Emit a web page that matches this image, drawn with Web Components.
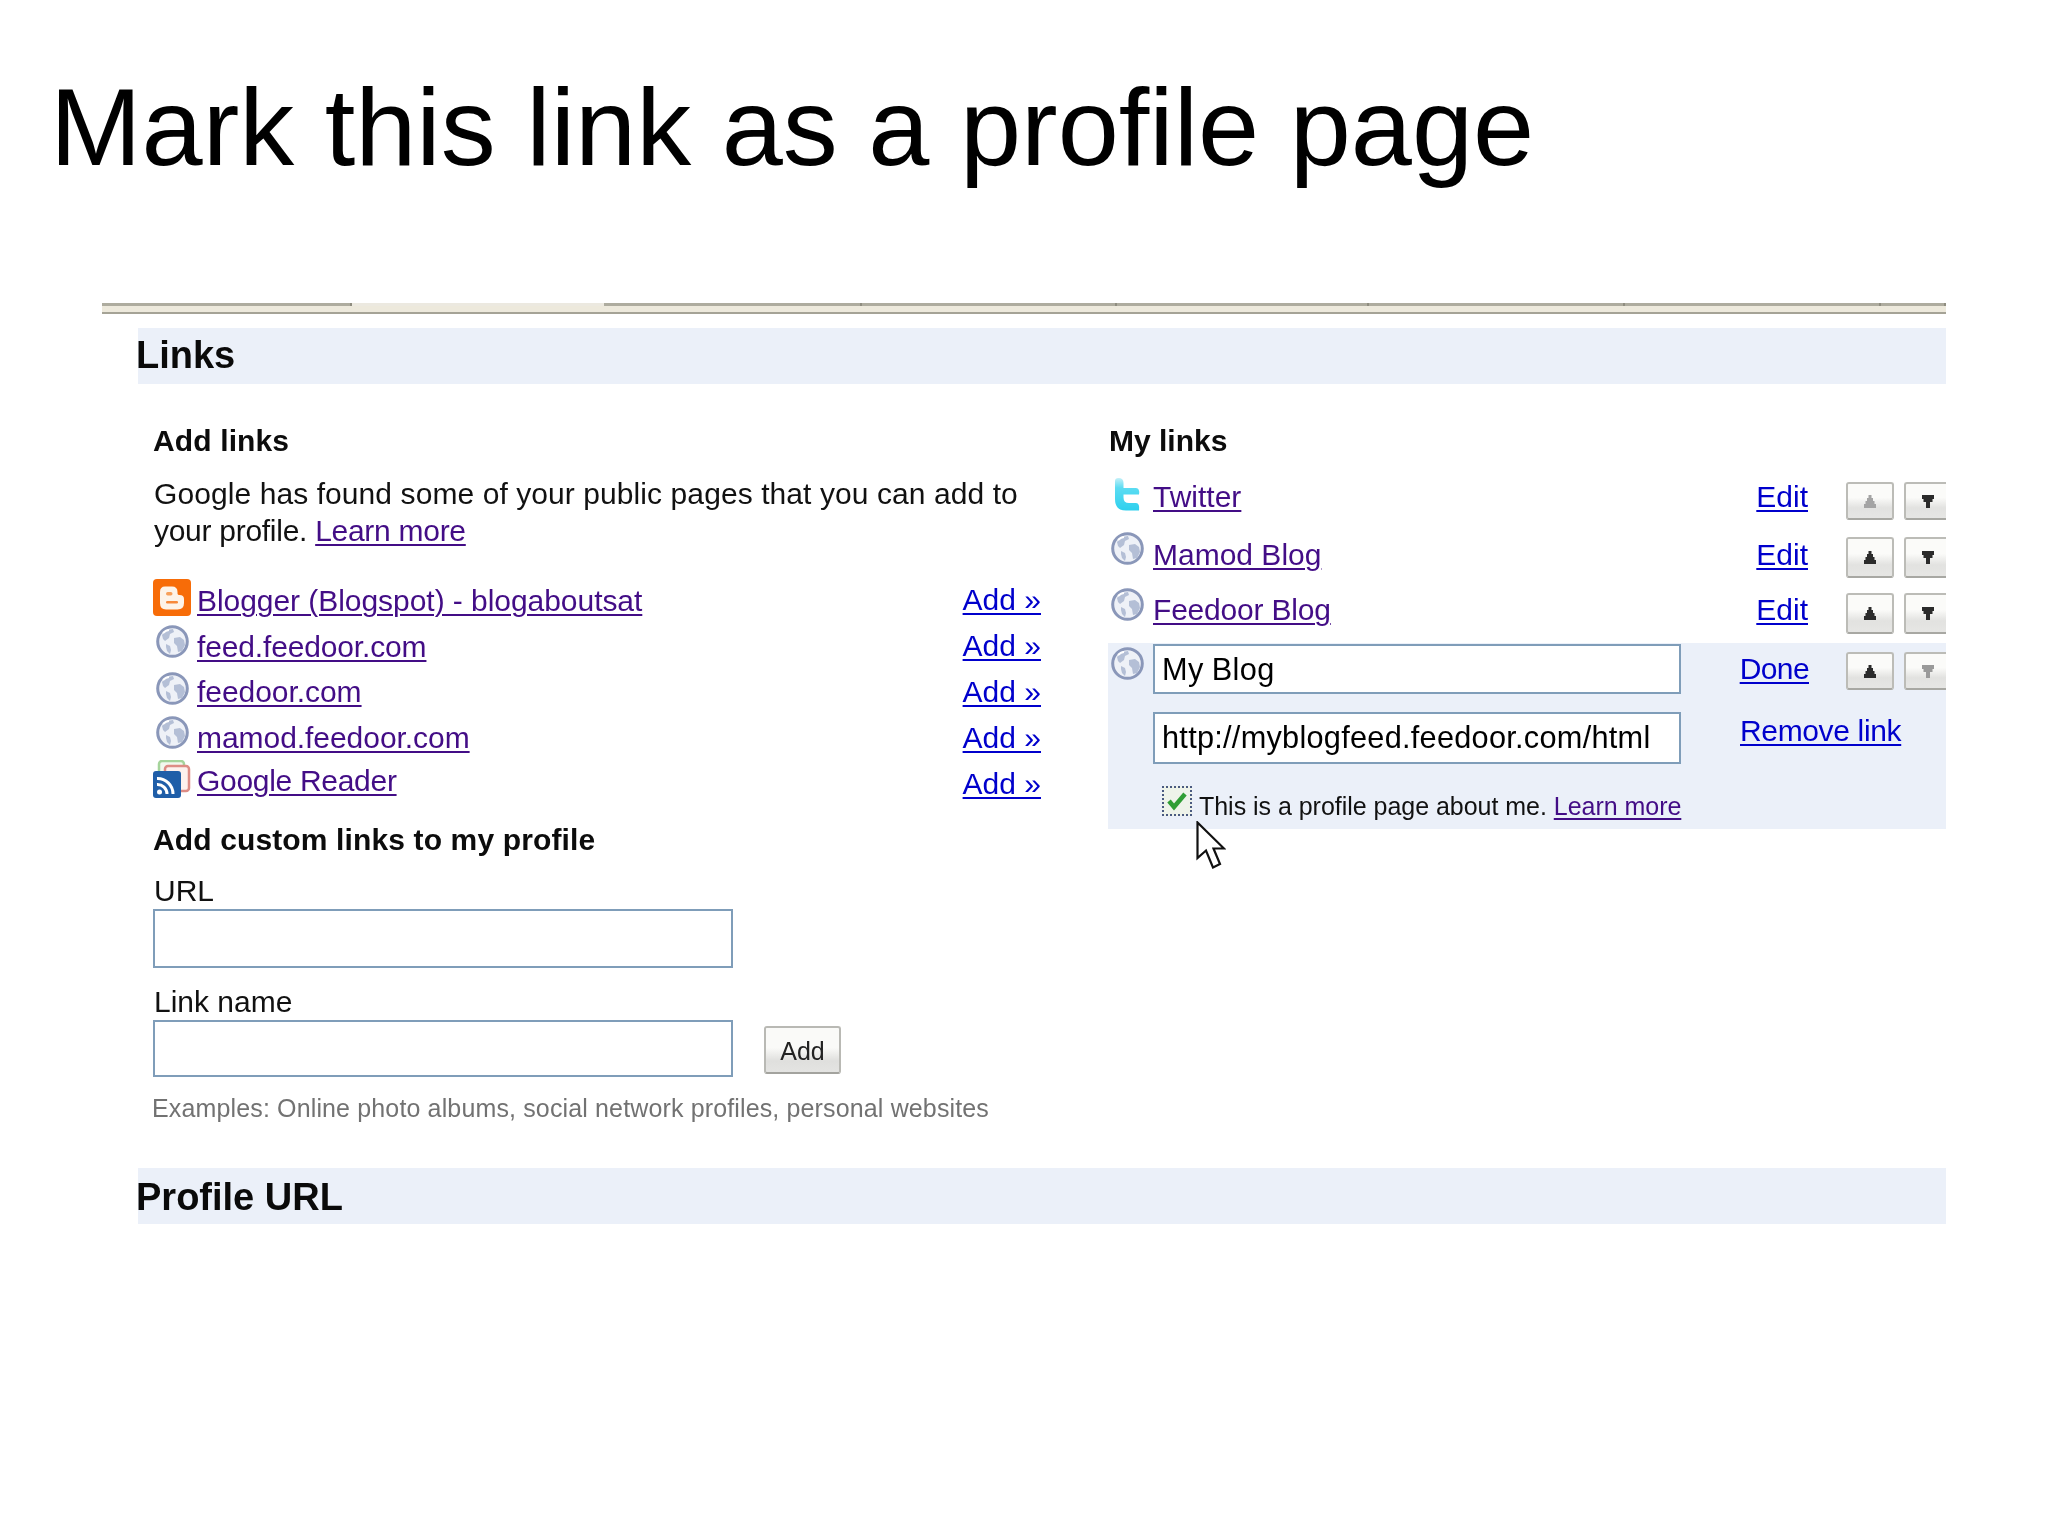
<!DOCTYPE html>
<html lang="en">
<head>
<meta charset="utf-8">
<title>Mark this link as a profile page</title>
<style>
  html, body { margin: 0; padding: 0; background: #fff; }
  body { font-family: "Liberation Sans", Arial, sans-serif; color: #000; }
</style>
</head>
<body>
<slide-page heading="Mark this link as a profile page">
  <tab-strip></tab-strip>
  <section-bar line="54">Links</section-bar>
  <links-panel>
    <add-links slot="left"></add-links>
    <my-links slot="right"></my-links>
  </links-panel>
  <section-bar line="58" style="margin-top:45px">Profile URL</section-bar>
</slide-page>

<script>
const FONT = '"Liberation Sans", Arial, sans-serif';
const VISITED = '#430d86';
const FRESH = '#0000cc';

class SlidePage extends HTMLElement {
  constructor() {
    super();
    this.attachShadow({ mode: 'open' }).innerHTML = `
      <style>
        :host { display: block; width: 2048px; height: 1536px; overflow: hidden; background: #fff; font-family: ${FONT}; }
        h1 { margin: 0; padding: 62px 0 0 50px; font-size: 109.900px; line-height: 130px; font-weight: 400; color: #000; white-space: nowrap; }
        .content { margin: 111px 0 0 102px; width: 1844px; filter: blur(.45px); }
      </style>
      <h1>${this.getAttribute('heading')}</h1>
      <div class="content"><slot></slot></div>`;
  }
}

class TabStrip extends HTMLElement {
  constructor() {
    super();
    const widths = [250, 252, 258, 255, 252, 256, 256, 65];
    const tabs = widths.map((w, i) => `<i class="${i === 1 ? 'on' : ''}" style="width:${w}px"></i>`).join('');
    this.attachShadow({ mode: 'open' }).innerHTML = `
      <style>
        :host { display: flex; height: 9px; background: #ede9dc; border-bottom: 2px solid #a5a396; }
        i { display: block; height: 3px; box-sizing: border-box; background: #aeac9f; border-right: 2px solid #8f8d80; }
        i.on { background: #ece9e0; border-right: 0; }
      </style>${tabs}`;
  }
}

class SectionBar extends HTMLElement {
  constructor() {
    super();
    const line = this.getAttribute('line');
    this.attachShadow({ mode: 'open' }).innerHTML = `
      <style>
        :host { display: block; margin-left: 36px; background: #ebf0f9; font-size: 38px; font-weight: 700; color: #0a0a0a;
                height: 56px; line-height: ${line}px; margin-top: 14px; }
        span { margin-left: -2px; display: block; }
      </style><span><slot></slot></span>`;
  }
}

class LinksPanel extends HTMLElement {
  constructor() {
    super();
    this.attachShadow({ mode: 'open' }).innerHTML = `
      <style>
        :host { display: grid; grid-template-columns: 970px 838px; margin-left: 36px; }
        .left { padding-left: 15px; }
      </style>
      <div class="left"><slot name="left"></slot></div>
      <div><slot name="right"></slot></div>`;
  }
}

class SiteIcon extends HTMLElement {
  static get art() {
    const globe = `<svg width="33" height="33" viewBox="0 0 33 33">
        <circle cx="16.5" cy="16.5" r="14.8" fill="#eef1f7" stroke="#8a97b9" stroke-width="3"/>
        <path d="M6 10c3-4 7-6 11-6l1 3-4 2-1 4-4 3-2-2zM18 13l6-1 4 3 1 5-3 6-4 1-1-6-3-3zM10 19l4 2 1 4-1 4-3-3-1-4z" fill="#b4bfd6"/>
        <path d="M7 8c2-2 4-3 6-3" stroke="#fff" stroke-width="2" fill="none"/>
      </svg>`;
    return {
      globe,
      blogger: `<svg width="38" height="37" viewBox="0 0 38 37">
        <rect width="38" height="37" rx="4" fill="#f76c08"/>
        <path d="M12 7.500H19Q24.500 7.500 24.500 13V14.500Q24.500 16 26.500 16Q31 16 31 20V24Q31 30.500 24.500 30.500H13Q7 30.500 7 24V13Q7 7.500 12 7.500Z" fill="#fdf3e8"/>
        <rect x="13" y="13" width="6.500" height="3.500" rx="1.700" fill="#f7a05a"/>
        <rect x="13" y="22" width="12" height="2.500" rx="1.200" fill="#f7893a"/>
      </svg>`,
      reader: `<svg width="38" height="38" viewBox="0 0 38 38">
        <rect x="6" y="1" width="25" height="24" rx="3" fill="#f2f8ee" stroke="#a5d49b" stroke-width="2.500"/>
        <rect x="12" y="6" width="24" height="25" rx="3" fill="#fdf1ee" stroke="#dd8c85" stroke-width="2.500"/>
        <rect x="0" y="11" width="28" height="27" rx="3" fill="#1f5ea8"/>
        <circle cx="6.500" cy="32" r="2.500" fill="#fff"/>
        <path d="M4 24.500a9.500 9.500 0 0 1 10 9.500M4 18.500a15.500 15.500 0 0 1 16 15.500" fill="none" stroke="#fff" stroke-width="3"/>
      </svg>`,
      twitter: `<svg width="26" height="33" viewBox="0 0 26 33">
        <defs><linearGradient id="tw" x1="0" y1="0" x2="0" y2="1"><stop offset="0" stop-color="#c4f0f8"/><stop offset=".3" stop-color="#5cdcf2"/><stop offset="1" stop-color="#2ed0ee"/></linearGradient></defs>
        <path d="M4.500 0Q9.500 0 9.500 5V10H22Q26 10 25 16.500H9.500V19.500Q9.500 25 15 25H22Q26 25 25 32.500H12Q1 32.500 1 21V3Q1 0 4.500 0Z" fill="url(#tw)"/>
      </svg>`
    };
  }
  constructor() {
    super();
    const kind = this.getAttribute('kind') || 'globe';
    this.attachShadow({ mode: 'open' }).innerHTML = `
      <style>:host { display: block; line-height: 0; } svg { display: block; }</style>
      ${SiteIcon.art[kind]}`;
  }
}

class AddRow extends HTMLElement {
  constructor() {
    super();
    const kind = this.getAttribute('kind');
    const shift = this.getAttribute('shift');
    const left = kind === 'globe' ? 3 : 0;
    this.attachShadow({ mode: 'open' }).innerHTML = `
      <style>
        :host { display: flex; height: 46px; width: 888px; font-size: 30px; line-height: 46px; }
        .icon { width: 44px; flex: none; }
        site-icon { margin: ${shift}px 0 0 ${left}px; }
        a { text-decoration: underline; text-decoration-thickness: 2px; text-underline-offset: 3px; }
        .name { flex: 1; color: ${VISITED}; margin-top: ${this.getAttribute('dy')}px; letter-spacing: ${this.getAttribute('ls')}px; }
        .name a { color: inherit; }
        .add { color: ${FRESH}; }
      </style>
      <div class="icon"><site-icon kind="${kind}"></site-icon></div>
      <div class="name"><a href="#">${this.getAttribute('name')}</a></div>
      <a class="add" href="#">Add »</a>`;
  }
}

class TextBox extends HTMLElement {
  constructor() {
    super();
    const w = this.getAttribute('w');
    const h = this.getAttribute('h');
    const tight = this.hasAttribute('tight');
    this.attachShadow({ mode: 'open' }).innerHTML = `
      <style>
        :host { display: block; box-sizing: border-box; width: ${w}px; height: ${h}px; border: 2px solid #7f9db9; background: #fff;
                padding-left: 7px; font-size: 30.700px; line-height: ${h - 4 + (tight ? 2 : 0)}px; color: #000;
                letter-spacing: ${tight ? .4 : .27}px; word-spacing: ${tight ? '-1px' : '0'}; white-space: nowrap; overflow: hidden; }
      </style><slot></slot>`;
  }
}

class GrayButton extends HTMLElement {
  constructor() {
    super();
    this.attachShadow({ mode: 'open' }).innerHTML = `
      <style>
        :host { display: block; box-sizing: border-box; width: 77px; height: 48px; border: 2px solid #b9b9b4; border-bottom-color: #a3a39e; border-radius: 3px;
                background: linear-gradient(#fafaf8 0 45%, #dfdfdd 75%, #e4e4e2); font-size: 25px; line-height: 46px; text-align: center; color: #222; }
      </style><slot></slot>`;
  }
}

class AddLinks extends HTMLElement {
  constructor() {
    super();
    const rows = [
      ['blogger', 'Blogger (Blogspot) - blogaboutsat', 2, 1, -.05],
      ['globe', 'feed.feedoor.com', 2, 1, -.15],
      ['globe', 'feedoor.com', 3, 0, -.05],
      ['globe', 'mamod.feedoor.com', 1, 0, -.05],
      ['reader', 'Google Reader', -1, -3, -.3]
    ].map(r => `<add-row kind="${r[0]}" name="${r[1]}" shift="${r[2]}" dy="${r[3]}" ls="${r[4]}"></add-row>`).join('');
    this.attachShadow({ mode: 'open' }).innerHTML = `
      <style>
        :host { display: block; font-size: 30px; line-height: 30px; color: #111; }
        h3 { margin: 0; font-size: 30px; line-height: 30px; font-weight: 700; color: #0c0c0c; letter-spacing: .13px; }
        .top { padding-top: 42px; }
        p { margin: 19px 0 27px; line-height: 38px; width: 888px; padding-left: 1px; }
        .one { display: block; letter-spacing: .08px; margin-bottom: -1px; }
        .two { display: block; letter-spacing: -.28px; }
        p a { color: ${VISITED}; text-decoration-thickness: 2px; text-underline-offset: 3px; }
        .h2 { margin-top: 18px; }
        .label { margin-top: 21px; margin-bottom: 3px; padding-left: 1px; }
        .label.two-lbl { margin-top: 19px; margin-bottom: 0; }
        .url { margin-top: 2px; }
        .name { display: flex; margin-top: 3px; gap: 31px; align-items: flex-start; }
        gray-button { margin-top: 6px; }
        .note { margin-top: 16px; margin-left: -1px; font-size: 25px; color: #727272; letter-spacing: .14px; }
      </style>
      <h3 class="top">Add links</h3>
      <p><span class="one">Google has found some of your public pages that you can add to</span><span class="two">your profile. <a href="#">Learn more</a></span></p>
      ${rows}
      <h3 class="h2">Add custom links to my profile</h3>
      <div class="label">URL</div>
      <text-box class="url" w="580" h="59"></text-box>
      <div class="label two-lbl">Link name</div>
      <div class="name">
        <text-box w="580" h="57"></text-box>
        <gray-button>Add</gray-button>
      </div>
      <div class="note">Examples: Online photo albums, social network profiles, personal websites</div>`;
  }
}

class MoveButtons extends HTMLElement {
  constructor() {
    super();
    const h = this.getAttribute('h') || 38;
    const upOff = this.hasAttribute('up-off');
    const downOff = this.hasAttribute('down-off');
    const up = 'M4.500 0h3v3h1.500v3h1.500v3h1.500v4h-12v-4h1.500v-3h1.500v-3h1.500z';
    const down = 'M0 0h12v4h-1.500v3h-2.500v6h-4v-6h-2.500v-3h-1.500z';
    this.attachShadow({ mode: 'open' }).innerHTML = `
      <style>
        :host { display: flex; gap: 10px; height: ${h}px; }
        b { display: flex; align-items: center; justify-content: center; box-sizing: border-box; height: 100%;
            border: 2px solid #bcbcb7; border-bottom-color: #a8a8a3; border-radius: 3px;
            background: linear-gradient(#fbfbf9 0 40%, #e2e2e0 70%, #e6e6e4); }
        .up { width: 48px; }
        .down { width: 42px; border-right: 0; border-radius: 3px 0 0 3px; padding-left: 4px; }
        svg { display: block; }
      </style>
      <b class="up"><svg width="12" height="13" viewBox="0 0 12 13"><path d="${up}" fill="${upOff ? '#a4a4a4' : '#2b2b2b'}"/></svg></b>
      <b class="down"><svg width="12" height="13" viewBox="0 0 12 13"><path d="${down}" fill="${downOff ? '#9a9a9a' : '#2b2b2b'}"/></svg></b>`;
  }
}

class MyLink extends HTMLElement {
  constructor() {
    super();
    const a = n => this.getAttribute(n);
    this.attachShadow({ mode: 'open' }).innerHTML = `
      <style>
        :host { display: grid; grid-template-columns: 45px 528px 127px 38px 100px; height: ${a('h')}px; font-size: 30px; line-height: 30px; }
        site-icon { margin: ${a('icon-top')}px 0 0 ${a('kind') === 'twitter' ? 6 : 3}px; }
        a { text-decoration-thickness: 2px; text-underline-offset: 3px; }
        .text { margin-top: ${a('text-top')}px; }
        .name a { color: ${VISITED}; letter-spacing: ${a('ls') || 0}px; }
        .edit { text-align: right; }
        .edit a { color: ${FRESH}; }
        move-buttons { grid-column: 5; }
      </style>
      <site-icon kind="${a('kind')}"></site-icon>
      <div class="text name"><a href="#">${a('name')}</a></div>
      <div class="text edit"><a href="#">Edit</a></div>
      <move-buttons h="${a('bh')}" ${this.hasAttribute('up-off') ? 'up-off' : ''}></move-buttons>`;
  }
}

class LinkEditor extends HTMLElement {
  constructor() {
    super();
    this.attachShadow({ mode: 'open' }).innerHTML = `
      <style>
        :host { display: grid; grid-template-columns: 45px 528px 127px 38px 100px; grid-template-rows: 69px 74px 43px;
                background: #ebf0f9; position: relative; font-size: 30px; line-height: 30px; }
        site-icon { margin: 4px 0 0 3px; }
        a { color: ${FRESH}; text-decoration-thickness: 2px; text-underline-offset: 3px; }
        .name { margin-top: 1px; }
        .done { margin: 11px -1px 0 0; text-align: right; letter-spacing: -.6px; }
        move-buttons { grid-column: 5; margin-top: 9px; }
        .remove { grid-column: 3 / 6; padding-left: 59px; margin-top: 4px; letter-spacing: -.35px; }
        .url { grid-column: 2; }
        .check { grid-column: 2 / 6; display: flex; margin-left: 9px; font-size: 25px; }
        .box { box-sizing: border-box; width: 30px; height: 30px; border: 2px dotted #4a5a80; background: #eef3ea; margin-right: 7px; }
        .box svg { display: block; }
        .label { margin-top: 5px; color: #111; letter-spacing: -.03px; }
        .label a { color: ${VISITED}; }
        mouse-cursor { position: absolute; left: 88px; top: 178px; }
      </style>
      <site-icon kind="globe"></site-icon>
      <text-box class="name" w="528" h="50" tight>My Blog</text-box>
      <div class="done"><a href="#">Done</a></div>
      <move-buttons h="38" down-off></move-buttons>
      <div></div>
      <text-box class="url" w="528" h="52">http://myblogfeed.feedoor.com/html</text-box>
      <div class="remove"><a href="#">Remove link</a></div>
      <div></div>
      <div class="check">
        <div class="box"><svg width="26" height="26" viewBox="0 0 26 26"><path d="M5 13l5 6 11-13" fill="none" stroke="#2f9e35" stroke-width="4.500"/></svg></div>
        <div class="label">This is a profile page about me. <a href="#">Learn more</a></div>
      </div>
      <mouse-cursor></mouse-cursor>`;
  }
}

class MouseCursor extends HTMLElement {
  constructor() {
    super();
    this.attachShadow({ mode: 'open' }).innerHTML = `
      <style>:host { display: block; line-height: 0; }</style>
      <svg width="30" height="48" viewBox="0 0 30 48">
        <path d="M1.500 1.500V37L10 29.500L17 46.500L24 43L17.500 27.500H28Z" fill="#fff" stroke="#111" stroke-width="2.200" stroke-linejoin="miter"/>
      </svg>`;
  }
}

class MyLinks extends HTMLElement {
  constructor() {
    super();
    this.attachShadow({ mode: 'open' }).innerHTML = `
      <style>
        :host { display: block; }
        h3 { margin: 0 0 26px; padding: 42px 0 0 1px; font-size: 30px; line-height: 30px; font-weight: 700; color: #0c0c0c; }
      </style>
      <h3>My links</h3>
      <my-link kind="twitter" name="Twitter" h="55" bh="38" icon-top="-4" text-top="0" up-off></my-link>
      <my-link kind="globe" name="Mamod Blog" h="56" bh="41" icon-top="-5" text-top="3"></my-link>
      <my-link kind="globe" name="Feedoor Blog" h="50" bh="41" icon-top="-5" text-top="2" ls="-.2"></my-link>
      <link-editor></link-editor>`;
  }
}

customElements.define('site-icon', SiteIcon);
customElements.define('text-box', TextBox);
customElements.define('gray-button', GrayButton);
customElements.define('move-buttons', MoveButtons);
customElements.define('mouse-cursor', MouseCursor);
customElements.define('add-row', AddRow);
customElements.define('my-link', MyLink);
customElements.define('link-editor', LinkEditor);
customElements.define('add-links', AddLinks);
customElements.define('my-links', MyLinks);
customElements.define('tab-strip', TabStrip);
customElements.define('section-bar', SectionBar);
customElements.define('links-panel', LinksPanel);
customElements.define('slide-page', SlidePage);
</script>
</body>
</html>
